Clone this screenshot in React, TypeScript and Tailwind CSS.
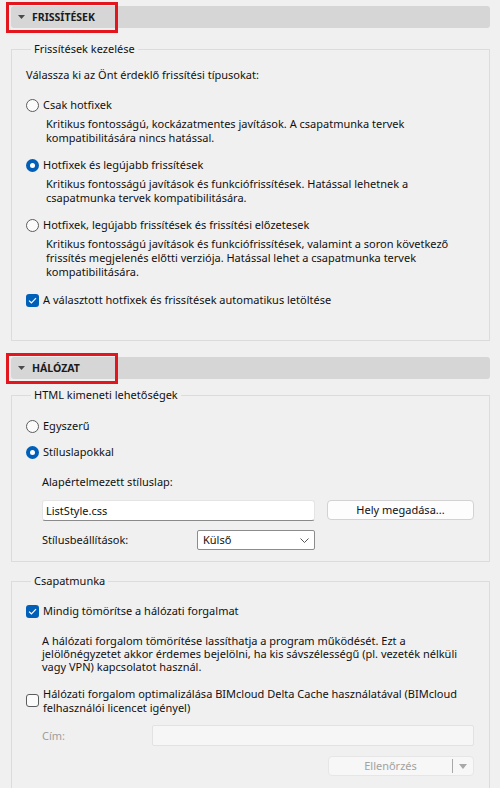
import type { ReactNode } from "react"

// Windows 11 style settings panel (two collapsible sections)

function Radio({ checked }: { checked?: boolean }) {
  if (checked)
    return (
      <span className="w-[13px] h-[13px] rounded-full bg-[#005fb8] flex items-center justify-center shrink-0">
        <span className="w-[5px] h-[5px] rounded-full bg-white" />
      </span>
    )
  return <span className="w-[13px] h-[13px] rounded-full border border-[#5c5c5c] bg-[#fbfbfb] shrink-0" />
}

function Check({ checked }: { checked?: boolean }) {
  if (checked)
    return (
      <span className="w-[13px] h-[13px] rounded-[3px] bg-[#005fb8] flex items-center justify-center shrink-0">
        <svg width="9" height="7" viewBox="0 0 9 7" fill="none">
          <path d="M1 3.6 L3.4 5.8 L8 1.2" stroke="white" strokeWidth="1.2" />
        </svg>
      </span>
    )
  return <span className="w-[13px] h-[13px] rounded-[3px] border border-[#5c5c5c] bg-[#fbfbfb] shrink-0" />
}

function SectionHeader({ title }: { title: string }) {
  return (
    <div className="relative ml-[11px] mr-[10px] h-[22px] rounded-[3px] bg-[#d6d6d6] flex items-center pl-[7px]">
      <svg width="7" height="4" viewBox="0 0 7 4">
        <path d="M0 0 H7 L3.5 4 Z" fill="#4a4a4a" />
      </svg>
      <span className="ml-[7px] font-bold text-[10.5px] text-[#1b1b1b]">{title}</span>
      <div className="absolute left-[-5px] top-[-4px] w-[112px] h-[31px] border-[3px] border-[#e3151d] pointer-events-none" />
    </div>
  )
}

function Group({ legend, className, children }: { legend: string; className: string; children: ReactNode }) {
  return (
    <fieldset className={`ml-[11px] mr-[10px] border border-[#dcdcdc] pl-[14px] ${className}`}>
      <legend className="ml-[5px] px-[3px] leading-[16px]">{legend}</legend>
      {children}
    </fieldset>
  )
}

export default function App() {
  return (
    <div className="w-[500px] h-[788px] overflow-hidden bg-[#f0f0f0] pt-[6px] text-[11px] leading-[16px] text-[#111] font-['Noto_Sans',sans-serif]">
      <SectionHeader title="FRISSÍTÉSEK" />

      <Group legend="Frissítések kezelése" className="mt-[13px] pb-[32px]">
        <div className="flex flex-col pt-[10px]">
          <div className="h-[16px]">Válassza ki az Önt érdeklő frissítési típusokat:</div>

          <div className="mt-[14px] h-[16px] flex items-center gap-[4px]">
            <Radio /> <span>Csak hotfixek</span>
          </div>
          <p className="mt-[4px] ml-[20px] leading-[14px]">
            Kritikus fontosságú, kockázatmentes javítások. A csapatmunka tervek
            <br />
            kompatibilitására nincs hatással.
          </p>

          <div className="mt-[12px] h-[16px] flex items-center gap-[4px]">
            <Radio checked /> <span>Hotfixek és legújabb frissítések</span>
          </div>
          <p className="mt-[4px] ml-[20px] leading-[14px]">
            Kritikus fontosságú javítások és funkciófrissítések. Hatással lehetnek a
            <br />
            csapatmunka tervek kompatibilitására.
          </p>

          <div className="mt-[12px] h-[16px] flex items-center gap-[4px]">
            <Radio /> <span>Hotfixek, legújabb frissítések és frissítési előzetesek</span>
          </div>
          <p className="mt-[4px] ml-[20px] leading-[14px]">
            Kritikus fontosságú javítások és funkciófrissítések, valamint a soron következő
            <br />
            frissítés megjelenés előtti verziója. Hatással lehet a csapatmunka tervek
            <br />
            kompatibilitására.
          </p>

          <div className="mt-[13px] h-[16px] flex items-center gap-[4px]">
            <Check checked /> <span>A választott hotfixek és frissítések automatikus letöltése</span>
          </div>
        </div>
      </Group>

      <div className="mt-[16px]">
        <SectionHeader title="HÁLÓZAT" />
      </div>

      <Group legend="HTML kimeneti lehetőségek" className="mt-[8px] pb-[11px]">
        <div className="flex flex-col pt-[15px]">
          <div className="h-[16px] flex items-center gap-[4px]">
            <Radio /> <span>Egyszerű</span>
          </div>
          <div className="mt-[10px] h-[16px] flex items-center gap-[4px]">
            <Radio checked /> <span>Stíluslapokkal</span>
          </div>
          <div className="mt-[14px] ml-[16px] h-[16px]">Alapértelmezett stíluslap:</div>
          <div className="mt-[10px] ml-[16px] flex items-start gap-[12px]">
            <div className="w-[273px] h-[21px] bg-white border border-[#e4e4e4] border-b-[#8a8a8a] rounded-[3px] pl-[3px] flex items-center">
              ListStyle.css
            </div>
            <div className="w-[147px] h-[20px] bg-[#fdfdfd] border border-[#d2d2d2] rounded-[4px] flex items-center justify-center">
              Hely megadása...
            </div>
          </div>
          <div className="mt-[9px] ml-[16px] flex items-center">
            <span className="w-[155px]">Stílusbeállítások:</span>
            <div className="w-[118px] h-[20px] bg-white border border-[#8c8c8c] rounded-[2px] flex items-center justify-between pl-[5px] pr-[5px]">
              <span>Külső</span>
              <svg width="9" height="5" viewBox="0 0 9 5" fill="none">
                <path d="M0.5 0.5 L4.5 4.5 L8.5 0.5" stroke="#555" strokeWidth="1" />
              </svg>
            </div>
          </div>
        </div>
      </Group>

      <Group legend="Csapatmunka" className="mt-[11px] pb-[20px]">
        <div className="flex flex-col pt-[14px]">
          <div className="h-[16px] flex items-center gap-[4px]">
            <Check checked /> <span>Mindig tömörítse a hálózati forgalmat</span>
          </div>
          <p className="mt-[15px] ml-[16px] leading-[13px]">
            A hálózati forgalom tömörítése lassíthatja a program működését. Ezt a
            <br />
            jelölőnégyzetet akkor érdemes bejelölni, ha kis sávszélességű (pl. vezeték nélküli
            <br />
            vagy VPN) kapcsolatot használ.
          </p>
          <div className="mt-[14px] flex items-center gap-[4px]">
            <Check />
            <span className="leading-[13.5px]">
              Hálózati forgalom optimalizálása BIMcloud Delta Cache használatával (BIMcloud
              <br />
              felhasználói licencet igényel)
            </span>
          </div>
          <div className="mt-[11px] ml-[16px] flex items-center">
            <span className="w-[110px] text-[#9e9e9e]">Cím:</span>
            <div className="w-[322px] h-[21px] bg-[#f6f6f6] border border-[#e2e2e2] rounded-[2px]" />
          </div>
          <div className="mt-[10px] ml-[302px] w-[146px] h-[20px] bg-[#f7f7f7] border border-[#e6e6e6] rounded-[4px] flex items-center text-[#a2a2a2]">
            <span className="flex-1 text-center">Ellenőrzés</span>
            <span className="w-px h-[14px] bg-[#a8a8a8]" />
            <span className="w-[20px] flex justify-center">
              <svg width="8" height="5" viewBox="0 0 8 5">
                <path d="M0 0 H8 L4 5 Z" fill="#a8a8a8" />
              </svg>
            </span>
          </div>
        </div>
      </Group>
    </div>
  )
}
